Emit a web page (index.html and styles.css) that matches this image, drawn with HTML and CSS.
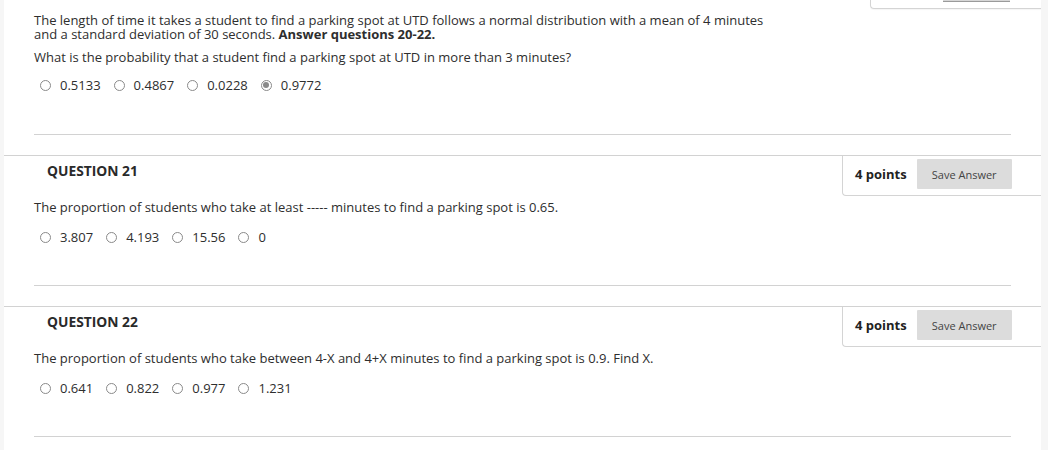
FILE: index.html
```html
<!DOCTYPE html>
<html>
<head>
<meta charset="utf-8">
<link rel="stylesheet" href="styles.css">
</head>
<body>
<div class="page">
  <div class="main">
    <div class="prev-tail">
      <div class="tail-box"><span class="tail-btn"></span></div>
    </div>

    <div class="q-body q20">
      <p class="intro">The length of time it takes a student to find a parking spot at UTD follows a normal distribution with a mean of 4 minutes and a standard deviation of 30 seconds. <b>Answer questions 20-22.</b></p>
      <p class="ask">What is the probability that a student find a parking spot at UTD in more than 3 minutes?</p>
      <div class="options">
        <span class="opt"><span class="radio"></span>0.5133</span>
        <span class="opt"><span class="radio"></span>0.4867</span>
        <span class="opt"><span class="radio"></span>0.0228</span>
        <span class="opt"><span class="radio checked"></span>0.9772</span>
      </div>
      <hr class="sep">
    </div>

    <div class="question">
      <div class="q-header">
        <h3 class="q-label">QUESTION 21</h3>
        <div class="points-box"><span class="points">4 points</span><button class="save">Save Answer</button></div>
      </div>
      <div class="q-body">
        <p class="ask">The proportion of students who take at least ----- minutes to find a parking spot is 0.65.</p>
        <div class="options">
          <span class="opt"><span class="radio"></span>3.807</span>
          <span class="opt"><span class="radio"></span>4.193</span>
          <span class="opt"><span class="radio"></span>15.56</span>
          <span class="opt"><span class="radio"></span>0</span>
        </div>
        <hr class="sep">
      </div>
    </div>

    <div class="question">
      <div class="q-header">
        <h3 class="q-label">QUESTION 22</h3>
        <div class="points-box"><span class="points">4 points</span><button class="save">Save Answer</button></div>
      </div>
      <div class="q-body">
        <p class="ask">The proportion of students who take between 4-X and 4+X minutes to find a parking spot is 0.9. Find X.</p>
        <div class="options">
          <span class="opt"><span class="radio"></span>0.641</span>
          <span class="opt"><span class="radio"></span>0.822</span>
          <span class="opt"><span class="radio"></span>0.977</span>
          <span class="opt"><span class="radio"></span>1.231</span>
        </div>
        <hr class="sep">
      </div>
    </div>
  </div>
</div>
</body>
</html>
```
FILE: styles.css
```css
html, body {
  margin: 0;
  padding: 0;
  background: #f6f6f6;
  font-family: "Open Sans", "Noto Sans", sans-serif;
  color: #2e2e2e;
  font-size: 13px;
}
.page {
  width: 1048px;
  height: 450px;
  overflow: hidden;
  display: flex;
}
.main {
  margin-left: 4px;
  width: 1037px;
  background: #fff;
}
.prev-tail {
  height: 9px;
  display: flex;
  justify-content: flex-end;
}
.tail-box {
  width: 170px;
  height: 8px;
  border-left: 1px solid #d4d4d4;
  border-bottom: 1px solid #d4d4d4;
  border-bottom-left-radius: 4px;
  box-shadow: 0 1px 1px rgba(0,0,0,0.04);
}
.tail-btn {
  display: block;
  margin-left: 72px;
  width: 67px;
  height: 1px;
  background: #d6d6d6;
  border-bottom: 1px solid #9a9a9a;
}
.q-body {
  padding: 0 30px;
}
.q20 {
  padding-top: 4px;
}
p {
  margin: 0;
}
.intro {
  width: 740px;
  line-height: 14px;
}
.q20 .ask {
  margin-top: 9px;
}
.ask {
  line-height: 14px;
}
.options {
  display: flex;
  padding-left: 6px;
  margin-top: 14px;
  line-height: 14px;
}
.opt {
  display: flex;
  align-items: center;
  margin-right: 13px;
}
.radio {
  width: 9px;
  height: 9px;
  border: 1px solid #8a8a8a;
  border-radius: 50%;
  margin-right: 9px;
  box-sizing: content-box;
  display: inline-flex;
  align-items: center;
  justify-content: center;
  background: #fff;
}
.radio.checked::after {
  content: "";
  width: 6px;
  height: 6px;
  border-radius: 50%;
  background: #8a8a8a;
}
.sep {
  border: 0;
  border-top: 1px solid #d2d2d2;
  margin: 42px 0 0 0;
  height: 0;
}
.question .sep {
  margin-top: 41px;
}
.question {
  margin-top: 20px;
  border-top: 1px solid #d2d2d2;
}
.q-header {
  display: flex;
  justify-content: space-between;
  align-items: flex-start;
  height: 40px;
}
.q-label {
  margin: 7px 0 0 43px;
  font-size: 13.8px;
  font-weight: 700;
  line-height: 16px;
  color: #2a2a2a;
}
.points-box {
  width: 199px;
  height: 40px;
  box-sizing: border-box;
  border-left: 1px solid #d4d4d4;
  border-bottom: 1px solid #d4d4d4;
  border-bottom-left-radius: 4px;
  display: flex;
  align-items: center;
  padding-left: 12px;
  padding-bottom: 3px;
}
.points {
  font-weight: 700;
  font-size: 13px;
  color: #222;
  margin-right: 10px;
}
.save {
  width: 95px;
  height: 30px;
  border: 0;
  border-radius: 1px;
  background: #dcdcdc;
  font-family: "Open Sans", "Noto Sans", sans-serif;
  font-size: 11px;
  color: #444;
  padding: 0;
}
.question .ask {
  margin-top: 4px;
}
.question .options {
  margin-top: 16px;
}
```
